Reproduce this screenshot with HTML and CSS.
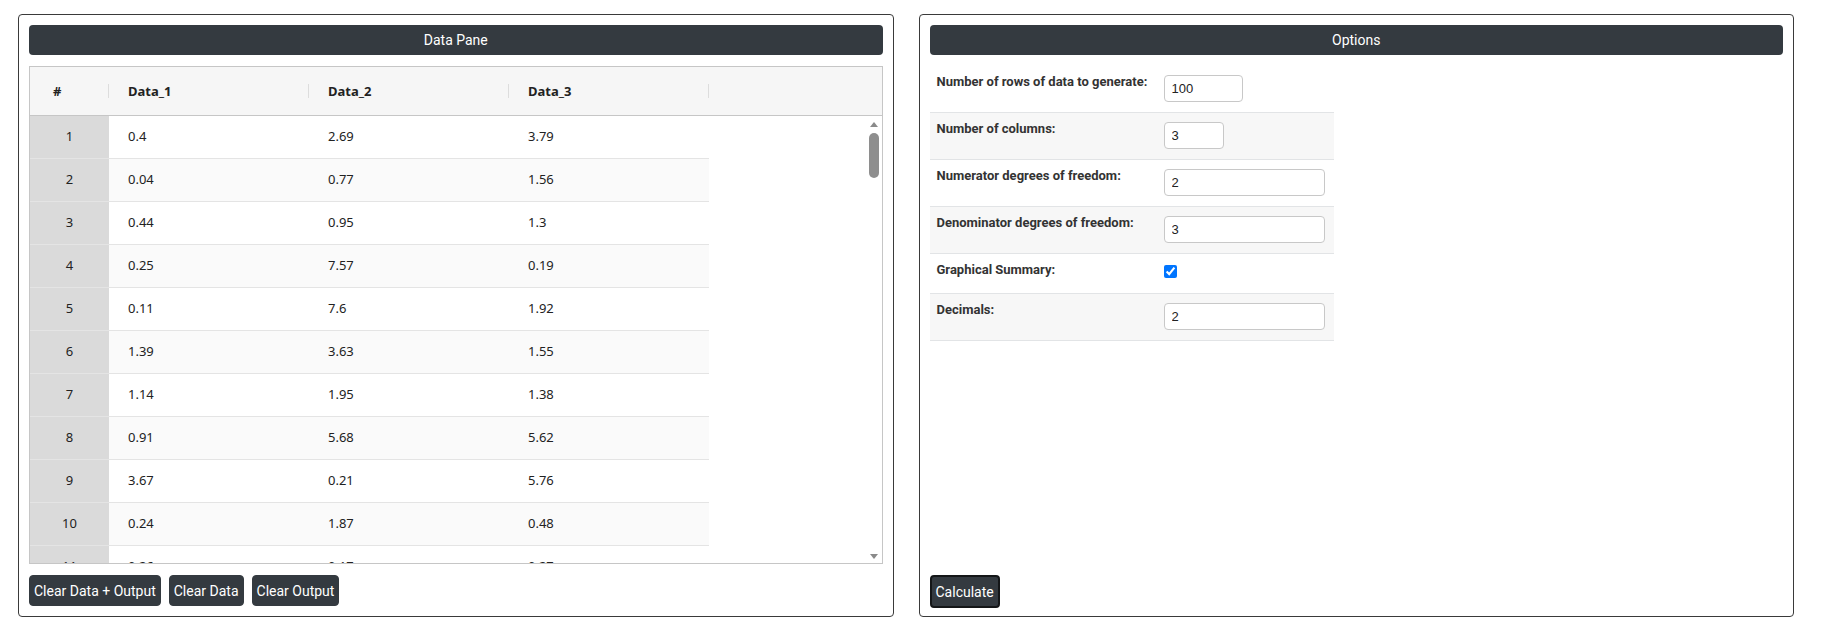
FILE: index.html
```html
<!DOCTYPE html>
<html lang="en">
<head>
    <meta charset="UTF-8">
    <meta name="viewport" content="width=device-width, initial-scale=1.0">
    <title>F Distribution Generator</title>
    <link rel="stylesheet" href="styles.css">
</head>
<body>
    <main class="workspace">
        <section class="pane">
            <h2 class="pane-title">Data Pane</h2>
            <div class="grid">
                <div class="grid-head">
                    <div class="col-head col-num">#</div>
                    <div class="col-head">Data_1</div>
                    <div class="col-head">Data_2</div>
                    <div class="col-head">Data_3</div>
                </div>
                <div class="grid-body">
                    <div class="grid-row"><div class="cell cell-num">1</div><div class="cell">0.4</div><div class="cell">2.69</div><div class="cell">3.79</div></div>
                    <div class="grid-row"><div class="cell cell-num">2</div><div class="cell">0.04</div><div class="cell">0.77</div><div class="cell">1.56</div></div>
                    <div class="grid-row"><div class="cell cell-num">3</div><div class="cell">0.44</div><div class="cell">0.95</div><div class="cell">1.3</div></div>
                    <div class="grid-row"><div class="cell cell-num">4</div><div class="cell">0.25</div><div class="cell">7.57</div><div class="cell">0.19</div></div>
                    <div class="grid-row"><div class="cell cell-num">5</div><div class="cell">0.11</div><div class="cell">7.6</div><div class="cell">1.92</div></div>
                    <div class="grid-row"><div class="cell cell-num">6</div><div class="cell">1.39</div><div class="cell">3.63</div><div class="cell">1.55</div></div>
                    <div class="grid-row"><div class="cell cell-num">7</div><div class="cell">1.14</div><div class="cell">1.95</div><div class="cell">1.38</div></div>
                    <div class="grid-row"><div class="cell cell-num">8</div><div class="cell">0.91</div><div class="cell">5.68</div><div class="cell">5.62</div></div>
                    <div class="grid-row"><div class="cell cell-num">9</div><div class="cell">3.67</div><div class="cell">0.21</div><div class="cell">5.76</div></div>
                    <div class="grid-row"><div class="cell cell-num">10</div><div class="cell">0.24</div><div class="cell">1.87</div><div class="cell">0.48</div></div>
                    <div class="grid-row"><div class="cell cell-num">11</div><div class="cell">0.26</div><div class="cell">0.17</div><div class="cell">0.27</div></div>

                    <!-- vertical scroller of the grid body -->
                    <div class="scroller">
                        <span class="scroll-arrow up"></span>
                        <span class="scroll-thumb"></span>
                        <span class="scroll-arrow down"></span>
                    </div>
                </div>
            </div>
            <div class="pane-actions">
                <button class="btn">Clear Data + Output</button>
                <button class="btn">Clear Data</button>
                <button class="btn">Clear Output</button>
            </div>
        </section>

        <section class="pane">
            <h2 class="pane-title">Options</h2>
            <table class="options">
                <tr>
                    <td class="opt-label">Number of rows of data to generate:</td>
                    <td><input class="opt-input w-rows" type="text" value="100"></td>
                </tr>
                <tr>
                    <td class="opt-label">Number of columns:</td>
                    <td><input class="opt-input w-cols" type="text" value="3"></td>
                </tr>
                <tr>
                    <td class="opt-label">Numerator degrees of freedom:</td>
                    <td><input class="opt-input" type="text" value="2"></td>
                </tr>
                <tr>
                    <td class="opt-label">Denominator degrees of freedom:</td>
                    <td><input class="opt-input" type="text" value="3"></td>
                </tr>
                <tr>
                    <td class="opt-label">Graphical Summary:</td>
                    <td><input class="opt-check" type="checkbox" checked></td>
                </tr>
                <tr>
                    <td class="opt-label">Decimals:</td>
                    <td><input class="opt-input" type="text" value="2"></td>
                </tr>
            </table>
            <div class="pane-actions pane-actions-end">
                <button class="btn btn-calc">Calculate</button>
            </div>
        </section>
    </main>
</body>
</html>
```

FILE: styles.css
```css
* {
    margin: 0;
    padding: 0;
    box-sizing: border-box;
}
body {
    background: #fff;
    font-family: Roboto, "Liberation Sans", Arial, sans-serif;
    color: #212529;
}
.workspace {
    display: grid;
    grid-template-columns: 1fr 1fr;
    column-gap: 25px;
    padding: 14px 30px 0 18px;
}
.pane {
    height: 603px;
    border: 1px solid #3a3a3a;
    border-radius: 4px;
    padding: 10px;
    display: flex;
    flex-direction: column;
    gap: 11px;
}
.pane-title {
    height: 30px;
    line-height: 30px;
    background: #343a40;
    color: #fff;
    border-radius: 4px;
    text-align: center;
    font-size: 14px;
    font-weight: 400;
}

/* data grid */
.grid {
    height: 498px;
    border: 1px solid #c6c6c6;
    display: flex;
    flex-direction: column;
    font-family: "Noto Sans", "Open Sans", sans-serif;
    font-size: 13px;
    color: #222;
}
.grid-head {
    height: 49px;
    flex: none;
    display: flex;
    background: #f6f6f6;
    border-bottom: 1px solid #c6c6c6;
}
.col-head {
    position: relative;
    width: 200px;
    padding-left: 19px;
    display: flex;
    align-items: center;
    font-weight: 700;
}
.col-head::after {
    content: "";
    position: absolute;
    right: 0;
    top: 17px;
    width: 1px;
    height: 14px;
    background: #ddd;
}
.col-head.col-num {
    width: 79px;
    padding-left: 23px;
}
.grid-body {
    position: relative;
    flex: 1;
    overflow: hidden;
    background: #fff;
}
.grid-row {
    display: flex;
    width: 679px;
    height: 43px;
    flex: none;
    border-bottom: 1px solid #e4e4e4;
}
.grid-row:nth-child(even) {
    background: #fafafa;
}
.cell {
    width: 200px;
    padding: 0 0 3px 19px;
    display: flex;
    align-items: center;
}
.cell.cell-num {
    width: 79px;
    padding-left: 0;
    justify-content: center;
    background: #dadada;
}

/* scroller drawn on the right edge of the body */
.scroller {
    position: absolute;
    top: 0;
    right: 0;
    bottom: 0;
    width: 15px;
    display: flex;
    flex-direction: column;
    align-items: center;
    background: #fff;
}
.scroll-arrow {
    width: 0;
    height: 0;
    border-left: 4px solid transparent;
    border-right: 4px solid transparent;
}
.scroll-arrow.up {
    margin-top: 6px;
    border-bottom: 5px solid #8a8a8a;
}
.scroll-arrow.down {
    margin-top: auto;
    margin-bottom: 4px;
    border-top: 5px solid #8a8a8a;
}
.scroll-thumb {
    width: 10px;
    height: 45px;
    margin-top: 6px;
    border-radius: 5px;
    background: #8e8e8e;
}

/* buttons */
.pane-actions {
    display: flex;
    gap: 8px;
}
.pane-actions-end {
    margin-top: auto;
    margin-bottom: -2px;
}
.btn {
    height: 31px;
    padding: 0 4px;
    background: #343a40;
    color: #fff;
    border: 1px solid #343a40;
    border-radius: 4px;
    font-family: Roboto, "Liberation Sans", Arial, sans-serif;
    font-size: 14px;
    cursor: pointer;
}
.btn:hover {
    background: #23272b;
}
.btn-calc {
    height: 33px;
    padding: 0 4px;
    border: 2px solid #141618;
}

/* options form */
.options {
    width: 404px;
    border-collapse: collapse;
    font-size: 13px;
}
.options td {
    vertical-align: top;
    padding: 5px 7px 10px;
    border-bottom: 1px solid #e2e4e6;
}
.options tr:nth-child(even) td {
    background: #f7f7f7;
}
.options .opt-label {
    width: 227px;
    line-height: 22px;
    font-weight: 700;
    color: #333;
}
.opt-input {
    display: block;
    width: 161px;
    height: 27px;
    margin-top: 4px;
    padding: 0 7px;
    border: 1px solid #c8c8c8;
    border-radius: 4px;
    font-family: "Liberation Sans", Arial, sans-serif;
    font-size: 13px;
    color: #222;
}
.opt-input.w-rows {
    width: 79px;
}
.opt-input.w-cols {
    width: 60px;
}
.opt-check {
    display: block;
    width: 13px;
    height: 13px;
    margin: 6px 0 5px;
}
```
